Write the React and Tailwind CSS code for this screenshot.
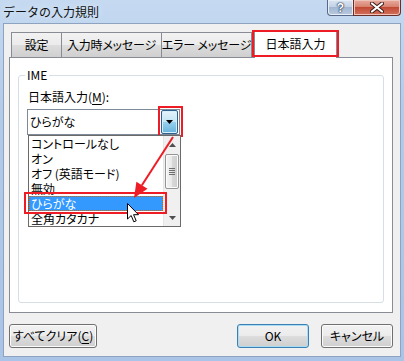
import React from 'react';

const jp = "font-['Noto_Sans_CJK_JP','Liberation_Sans',sans-serif] [font-feature-settings:'palt']";
const items = ['コントロールなし', 'オン', 'オフ (英語モード)', '無効', 'ひらがな', '全角カタカナ'];

function TitleButtons() {
  return (
    <div className="ml-auto mr-[3px] flex h-[16px]">
      <div className="flex w-[27px] items-center justify-center rounded-bl-[4px] border border-t-0 border-[#56698a] bg-[linear-gradient(#dbe5f1,#c3d2e6_45%,#a3b7d3_50%,#b8c9df)] shadow-[inset_0_0_0_1px_#e8eef6]">
        <span className="text-[12px] font-bold leading-none text-white [text-shadow:0_0_1px_#22324d,0_0_1px_#22324d,0_0_2px_#22324d] font-['Liberation_Sans',sans-serif]">?</span>
      </div>
      <div className="-ml-px flex w-[48px] items-center justify-center rounded-br-[4px] border border-t-0 border-[#6b2f2a] bg-[linear-gradient(#e8aba0,#d8826f_45%,#c24a35_50%,#d3715c)] shadow-[inset_0_0_0_1px_#eec3ba]">
        <svg width="14" height="11" viewBox="0 0 14 11">
          <path d="M2 1.5 L12 9.5 M12 1.5 L2 9.5" stroke="#3b1a17" strokeWidth="4" strokeLinecap="round" />
          <path d="M2 1.5 L12 9.5 M12 1.5 L2 9.5" stroke="#ffffff" strokeWidth="2.2" strokeLinecap="round" />
        </svg>
      </div>
    </div>
  );
}

function Tab({ children, width }) {
  return (
    <div className={`-ml-px first:ml-0 flex h-[25px] items-center justify-center whitespace-nowrap border border-b-0 border-[#898c95] bg-[linear-gradient(#f2f2f2,#ebebeb_50%,#dddddd_50%,#cfcfcf)] text-[12px] leading-[14px] tracking-[-0.2px] text-black ${width}`}>
      {children}
    </div>
  );
}

function ScrollArrow({ up }) {
  return (
    <div className="flex h-[17px] items-center justify-center">
      <svg width="7" height="4" viewBox="0 0 7 4">
        {up ? <polygon points="3.5,0 7,4 0,4" fill="#4f4f4f" /> : <polygon points="0,0 7,0 3.5,4" fill="#4f4f4f" />}
      </svg>
    </div>
  );
}

function DropList() {
  return (
    <div className="absolute left-0 top-[25px] z-10 flex h-[92px] w-[153px] border border-[#6a6a6a] bg-white">
      <div className="flex flex-1 flex-col">
        {items.map((t) => (
          <div
            key={t}
            className={
              t === 'ひらがな'
                ? 'h-[15px] shrink-0 overflow-hidden whitespace-nowrap border border-dotted border-[#cc6600] bg-[#3399ff] pl-[1px] text-[12px] leading-[13px] text-white'
                : 'h-[15px] shrink-0 overflow-hidden whitespace-nowrap pl-[2px] text-[12px] leading-[15px] text-black'
            }
          >
            {t}
          </div>
        ))}
      </div>
      <div className="flex w-[17px] flex-col border-l border-[#e6e6e6] bg-[#f0f0f0]">
        <ScrollArrow up />
        <div className="mx-px mt-px flex h-[35px] flex-col items-center justify-center gap-[1px] rounded-[2px] border border-[#959595] bg-[linear-gradient(90deg,#f4f4f4,#e9e9e9_50%,#d9d9d9_50%,#cdcdcd)] shadow-[inset_0_0_0_1px_#fbfbfb]">
          <div className="h-px w-[6px] bg-[#6f6f6f]" />
          <div className="h-px w-[6px] bg-[#6f6f6f]" />
          <div className="h-px w-[6px] bg-[#6f6f6f]" />
          <div className="h-px w-[6px] bg-[#6f6f6f]" />
        </div>
        <div className="flex-1" />
        <ScrollArrow />
      </div>
      {/* red box around the chosen item */}
      <div className="pointer-events-none absolute left-[-5px] top-[56px] h-[22px] w-[143px] border-2 border-[#ee1c25]" />
      {/* mouse pointer */}
      <svg className="absolute left-[98px] top-[67px]" width="13" height="21" viewBox="0 0 13 21">
        <path d="M0.5 0.5 L0.5 16 L4.2 12.5 L6.8 18.8 L9.2 17.8 L6.6 11.7 L11.5 11.7 Z" fill="#ffffff" stroke="#000000" strokeWidth="1" strokeLinejoin="round" />
      </svg>
    </div>
  );
}

function Combo() {
  return (
    <div className="relative ml-[8px] mt-[5px] flex h-[26px] w-[153px] items-stretch border border-[#7f8a99] bg-white pr-px">
      <div className="flex flex-1 items-center pl-[2px] text-[12px] leading-[14px] text-black">ひらがな</div>
      <div className="flex w-[17px] items-center justify-center rounded-[2px] border border-[#2c628b] bg-[linear-gradient(#e5f4fc,#c4e5f6_50%,#98d1ef_50%,#68b3db)] shadow-[inset_0_0_0_1px_#d8eefa]">
        <svg width="7" height="4" viewBox="0 0 7 4">
          <polygon points="0,0 7,0 3.5,4" fill="#000000" />
        </svg>
      </div>
      {/* red box around the drop button */}
      <div className="pointer-events-none absolute right-[-4px] top-[-4px] h-[31px] w-[25px] border-2 border-[#ee1c25]" />
      {/* red arrow */}
      <svg className="pointer-events-none absolute left-[100px] top-[25px] z-20" width="50" height="70" viewBox="0 0 50 70">
        <line x1="45" y1="2" x2="13.9" y2="50.3" stroke="#ee1c25" strokeWidth="2" />
        <polygon points="6,63 19.5,53.8 8.4,46.8" fill="#ee1c25" />
      </svg>
      <DropList />
    </div>
  );
}

function Button({ children, isDefault, width }) {
  return (
    <div
      className={`flex h-[24px] items-center justify-center whitespace-nowrap rounded-[3px] border bg-[linear-gradient(#f2f2f2,#ebebeb_50%,#dddddd_50%,#cfcfcf)] text-[12px] leading-[14px] text-black ${width} ${
        isDefault
          ? 'border-[#3c7fb1] shadow-[inset_0_0_0_1px_#a9dcf5]'
          : 'border-[#707070] shadow-[inset_0_0_0_1px_#fbfbfb]'
      }`}
    >
      {children}
    </div>
  );
}

export default function App() {
  return (
    <div className={`flex h-[361px] w-[404px] flex-col bg-[linear-gradient(#c5daf1,#b3cbe9_30%,#a9c4e7)] ${jp}`}>
      {/* Title bar */}
      <div className="flex h-[23px] shrink-0 items-start">
        <div className="pl-[3px] pt-[5px] text-[12px] leading-[14px] text-[#111] [font-feature-settings:normal] [text-shadow:0_0_6px_#e6f0fb]">
          データの入力規則
        </div>
        <TitleButtons />
      </div>

      {/* Client area */}
      <div className="mx-[3px] mb-[4px] flex flex-1 flex-col border border-[#8ea3c0] bg-[#f0f0f0] pb-[8px] pl-[5px] pr-[7px] pt-[7px]">
        {/* Tabs */}
        <div className="relative z-10 flex h-[26px] items-end pl-[2px]">
          <Tab width="w-[51px]">設定</Tab>
          <Tab width="w-[101px]">入力時メッセージ</Tab>
          <Tab width="w-[91px]">エラー メッセージ</Tab>
          <div className="relative -mb-px ml-[2px] flex h-[27px] w-[83px] items-center justify-center whitespace-nowrap border border-b-0 border-[#898c95] bg-white pb-[2px] text-[12px] leading-[14px] text-black">
            日本語入力
            <div className="pointer-events-none absolute -left-[3px] -right-[3px] -top-[2px] bottom-[1px] border-2 border-[#ee1c25]" />
          </div>
        </div>

        {/* Tab panel */}
        <div className="flex h-[256px] flex-col border border-[#898c95] bg-white px-[8px] pb-[9px] pt-[17px]">
          <div className="relative flex-1 rounded-[3px] border border-[#d5dfe5] pt-[14px]">
            <div className="absolute -top-[8px] left-[6px] bg-white px-[2px] text-[12px] leading-[14px] text-black">IME</div>
            <div className="ml-[9px] text-[12px] leading-[14px] text-black">
              日本語入力(<span className="underline underline-offset-2">M</span>):
            </div>
            <Combo />
          </div>
        </div>

        {/* Buttons */}
        <div className="mt-[11px] flex h-[24px] items-center">
          <Button width="w-[88px]">
            すべてクリア(<span className="underline underline-offset-2">C</span>)
          </Button>
          <div className="flex-1" />
          <Button width="w-[72px]" isDefault>
            OK
          </Button>
          <div className="w-[12px]" />
          <Button width="w-[72px]">キャンセル</Button>
        </div>
      </div>
    </div>
  );
}
